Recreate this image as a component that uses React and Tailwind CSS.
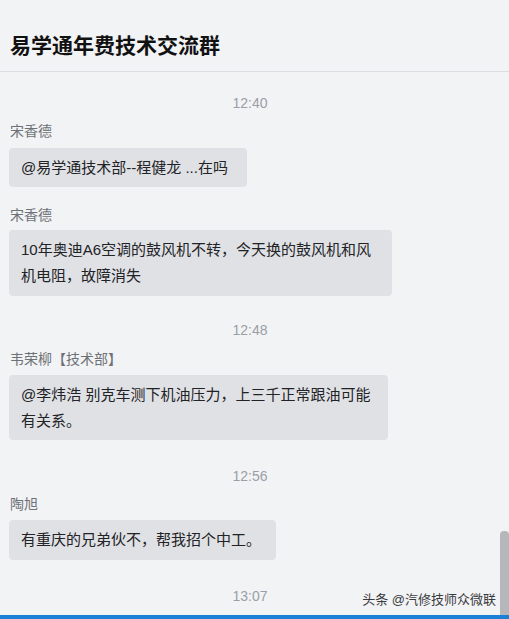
import React from "react";

const font = { fontFamily: '"Liberation Sans", "Noto Sans CJK SC", sans-serif' };

function Time({ children, className = "" }) {
  return (
    <div className={`text-center text-[14px] leading-[20px] text-[#9a9ea6] ${className}`}>{children}</div>
  );
}

function Name({ children, className = "" }) {
  return <div className={`pl-[10px] text-[14px] leading-[20px] text-[#6e7176] ${className}`}>{children}</div>;
}

function Bubble({ children, className = "" }) {
  return (
    <div
      className={`ml-[9px] rounded-[4px] bg-[#e0e1e4] pl-[12px] pr-[10px] pt-[7px] pb-[6px] text-[15px] leading-[26px] text-[#222326] ${className}`}
    >
      {children}
    </div>
  );
}

export default function App() {
  return (
    <div className="relative flex h-[619px] w-[509px] flex-col overflow-hidden bg-[#f2f3f5]" style={font}>
      <div className="border-b border-[#dcdde1] pl-[10px] pt-[34px] pb-[13px] text-[21px] font-bold leading-[24px] text-[#111]">
        易学通年费技术交流群
      </div>
      <div className="relative flex-1 overflow-hidden">
        <div className="flex w-[500px] flex-col items-start pt-[21px]">
          <Time className="w-full">12:40</Time>
          <Name className="mt-[8px]">宋香德</Name>
          <Bubble className="mt-[7px] w-[238px]">@易学通技术部--程健龙 ...在吗</Bubble>
          <Name className="mt-[18px]">宋香德</Name>
          <Bubble className="mt-[5px] w-[383px] pb-[7px]">10年奥迪A6空调的鼓风机不转，今天换的鼓风机和风机电阻，故障消失</Bubble>
          <Time className="mt-[24px] w-full">12:48</Time>
          <Name className="mt-[9px]">韦荣柳【技术部】</Name>
          <Bubble className="mt-[6px] w-[379px]">@李炜浩 别克车测下机油压力，上三千正常跟油可能有关系。</Bubble>
          <Time className="mt-[26px] w-full">12:56</Time>
          <Name className="mt-[8px]">陶旭</Name>
          <Bubble className="mt-[6px] w-[267px] pb-[7px]">有重庆的兄弟伙不，帮我招个中工。</Bubble>
          <Time className="mt-[26px] w-full">13:07</Time>
        </div>
        <div className="absolute right-0 bottom-0 h-[84px] w-[9px] rounded-t-[4px] bg-[#b6b7ba]" />
        <div className="absolute right-[13px] bottom-[6px] text-[13px] leading-[18px] text-[#3a3b3e]">头条 @汽修技师众微联</div>
      </div>
      <div className="h-[4px] w-full bg-[#1b7fd6]" />
    </div>
  );
}
